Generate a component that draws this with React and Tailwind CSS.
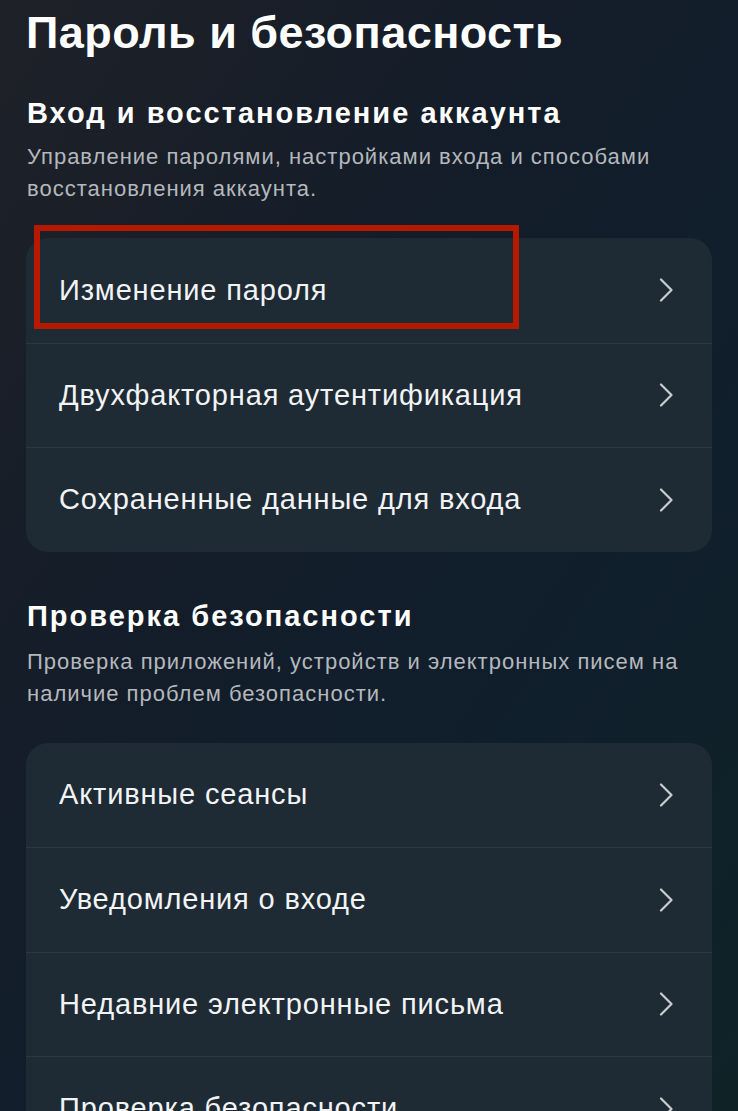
import React from 'react';

const sections = [
  {
    title: 'Вход и восстановление аккаунта',
    text: 'Управление паролями, настройками входа и способами восстановления аккаунта.',
    items: ['Изменение пароля', 'Двухфакторная аутентификация', 'Сохраненные данные для входа'],
  },
  {
    title: 'Проверка безопасности',
    text: 'Проверка приложений, устройств и электронных писем на наличие проблем безопасности.',
    items: ['Активные сеансы', 'Уведомления о входе', 'Недавние электронные письма', 'Проверка безопасности'],
  },
];

const Chevron = () => (
  <svg width="16" height="24" viewBox="0 0 16 24" fill="none" className="shrink-0">
    <path d="M3 1.5l10.5 10.5L3 22.5" stroke="#c9cdd1" strokeWidth="2.2" strokeLinecap="round" strokeLinejoin="round" />
  </svg>
);

const Row = ({ label, first, highlight }) => (
  <div className={`relative flex h-[104.5px] items-center justify-between pl-[33px] pr-[38px] ${first ? '' : 'border-t border-[#2c3841]'}`}>
    <span className="whitespace-nowrap text-[29px] tracking-[0.85px] text-[#f2f3f4]">{label}</span>
    <Chevron />
    {highlight && (
      <div className="pointer-events-none absolute left-[8px] top-[-13px] h-[104px] w-[485px] border-[6px] border-[#b51a00]" />
    )}
  </div>
);

export default function App() {
  return (
    <div
      className="h-[1111px] w-full overflow-hidden bg-[linear-gradient(125deg,#1f2128_0%,#141d29_35%,#101e2c_65%,#0f2327_100%)] px-[26px]"
      style={{ fontFamily: '"Liberation Sans", Arial, sans-serif' }}
    >
      <h1 className="pt-[7px] text-[45px] font-bold leading-[52px] tracking-[0.45px] text-white">Пароль и безопасность</h1>
      {sections.map((s, si) => (
        <div key={s.title} className={si === 0 ? 'mt-[37px]' : 'mt-[47px]'}>
          <h2 className="pl-[1px] text-[29px] font-bold leading-[34px] tracking-[2px] text-white">{s.title}</h2>
          <p className={`${si === 0 ? 'mt-[11px]' : 'mt-[13px]'} pl-[1px] text-[22px] leading-[32px] tracking-[1px] text-[#b4b8bd]`}>{s.text}</p>
          <div className="mt-[33px] rounded-[22px] bg-[#1e2a34]">
            {s.items.map((it, i) => (
              <Row key={it} label={it} first={i === 0} highlight={si === 0 && i === 0} />
            ))}
          </div>
        </div>
      ))}
    </div>
  );
}
